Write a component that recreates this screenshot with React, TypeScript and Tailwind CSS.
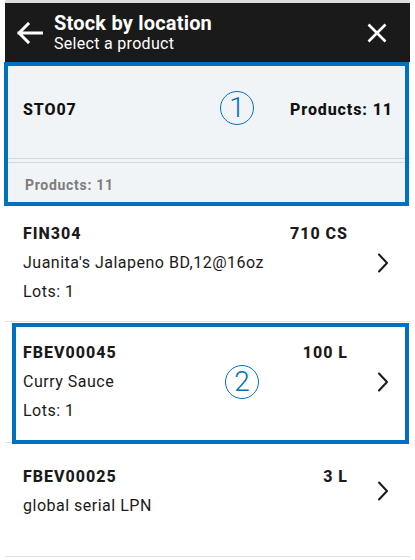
import React from 'react';

const items = [
  { code: 'FIN304', qty: '710 CS', name: "Juanita's Jalapeno BD,12@16oz", lots: 'Lots: 1', pad: 'pt-[14px] pb-[15px]' },
  { code: 'FBEV00045', qty: '100 L', name: 'Curry Sauce', lots: 'Lots: 1', pad: 'pt-[16px] pb-[17px]' },
  { code: 'FBEV00025', qty: '3 L', name: 'global serial LPN', lots: '', pad: 'pt-[19px] pb-[36px]' },
];

const Chevron = () => (
  <svg width="24" height="20" viewBox="0 0 24 20" fill="none">
    <path d="M8 1.5 L16 10 L8 18.5" stroke="#1a1a1a" strokeWidth="2" strokeLinecap="round" strokeLinejoin="round" />
  </svg>
);

const App = () => {
  return (
    <div className="relative w-[415px] h-[560px] bg-white px-[5px] font-['Roboto',sans-serif] overflow-hidden">
      <div className="border-t-[3px] border-[#dedede]">
        {/* Header */}
        <div className="h-[59px] bg-[#1a1a1a] flex items-center text-white">
          <svg className="ml-[12px]" width="26" height="22" viewBox="0 0 26 22" fill="none">
            <path d="M2 11 H25 M11 2 L2 11 L11 20" stroke="white" strokeWidth="3" strokeLinecap="square" />
          </svg>
          <div className="ml-[11px] flex-1 flex flex-col">
            <div className="text-[20px] font-bold leading-[21px] tracking-[0.2px]">Stock by location</div>
            <div className="text-[16px] leading-[19px] tracking-[0.3px]">Select a product</div>
          </div>
          <svg className="mr-[23px]" width="20" height="20" viewBox="0 0 20 20" fill="none">
            <path d="M1.5 1.5 L18.5 18.5 M18.5 1.5 L1.5 18.5" stroke="white" strokeWidth="2.6" />
          </svg>
        </div>

        {/* Location */}
        <div className="bg-[#f1f4f6]">
          <div className="h-[96px] flex items-center justify-between pl-[18px] pr-[17px] text-[16px] font-extrabold text-[#111] tracking-[0.9px]">
            <span>STO07</span>
            <span>Products: 11</span>
          </div>
          <div className="h-[5px] border-y border-[#d3d9de]" />
          <div className="h-[42px] flex items-center pl-[20px] pt-[3px] text-[14px] font-bold text-[#7d7d7d] tracking-[0.7px]">
            Products: 11
          </div>
        </div>

        {/* Products */}
        {items.map((item) => (
          <div key={item.code} className={`flex items-center border-b border-[#dde2e6] pl-[18px] pr-[15px] ${item.pad}`}>
            <div className="flex-1 flex flex-col text-[16px] leading-[29px] text-[#1a1a1a]">
              <div className="flex justify-between font-extrabold tracking-[1px]">
                <span>{item.code}</span>
                <span>{item.qty}</span>
              </div>
              <div className="tracking-[0.5px]">{item.name}</div>
              {item.lots && <div className="tracking-[0.5px]">{item.lots}</div>}
            </div>
            <div className="ml-[23px]">
              <Chevron />
            </div>
          </div>
        ))}
      </div>

      {/* Annotation boxes */}
      <div className="absolute left-[4px] top-[62px] w-[405px] h-[144px] border-[4px] border-[#0070c0]" />
      <div className="absolute left-[220px] top-[91px] w-[34px] h-[34px] rounded-full border-[1.5px] border-[#0070c0] flex items-center justify-center text-[#0070c0] text-[28px] font-light leading-none">
        1
      </div>
      <div className="absolute left-[12px] top-[323px] w-[397px] h-[121px] border-[4px] border-[#0070c0]" />
      <div className="absolute left-[225px] top-[365px] w-[34px] h-[34px] rounded-full border-[1.5px] border-[#0070c0] flex items-center justify-center text-[#0070c0] text-[28px] font-light leading-none">
        2
      </div>
    </div>
  );
};

export default App;
